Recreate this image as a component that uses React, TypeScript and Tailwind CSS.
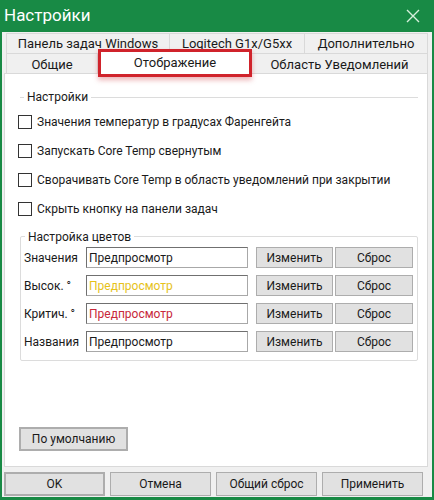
const checks = [
  'Значения температур в градусах Фаренгейта',
  'Запускать Core Temp свернутым',
  'Сворачивать Core Temp в область уведомлений при закрытии',
  'Скрыть кнопку на панели задач',
];

const colorRows = [
  { label: 'Значения', color: 'text-[#1a1a1a]' },
  { label: 'Высок. °', color: 'text-[#e6c21a]' },
  { label: 'Критич. °', color: 'text-[#c8283a]' },
  { label: 'Названия', color: 'text-[#1a1a1a]' },
];

function Btn({ children, className = '' }: { children: React.ReactNode; className?: string }) {
  return (
    <div
      className={
        'flex items-center justify-center border border-[#adadad] bg-[#e1e1e1] text-[#1a1a1a] ' + className
      }
    >
      {children}
    </div>
  );
}

export default function App() {
  return (
    <div
      className="flex h-[500px] w-[434px] flex-col bg-[#188a45] text-[12px] text-[#1a1a1a]"
      style={{ fontFamily: '"Segoe UI", Roboto, "Noto Sans", sans-serif' }}
    >
      {/* title bar */}
      <div className="flex h-[32px] items-center justify-between pl-[4px] pr-[14px] text-white">
        <span className="text-[17px]">Настройки</span>
        <svg width="14" height="14" viewBox="0 0 14 14">
          <path d="M1 1 L13 13 M13 1 L1 13" stroke="#d6f0dc" strokeWidth="1.4" />
        </svg>
      </div>

      <div className="mx-[2px] mb-[3px] flex flex-1 flex-col bg-[#f0f0f0] px-[2px]">
        {/* tabs */}
        <div className="mx-[2px] mt-[1px] flex h-[20px] border-t border-[#d9d9d9] text-[13px]">
          <div className="flex w-[164px] items-center justify-center border-x border-[#d9d9d9]">Панель задач Windows</div>
          <div className="flex w-[135px] items-center justify-center border-r border-[#d9d9d9]">Logitech G1x/G5xx</div>
          <div className="flex flex-1 items-center justify-center border-r border-[#d9d9d9]">Дополнительно</div>
        </div>
        <div className="relative mx-[2px] flex h-[20px] border-t border-[#d9d9d9] text-[13px]">
          <div className="flex w-[92px] items-center justify-center border-x border-[#d9d9d9] pt-[2px]">Общие</div>
          <div className="relative z-10 -mt-[5px] -mb-[4px] flex w-[154px] items-center justify-center border-[3px] border-[#d0232b] bg-white pb-[1px] shadow-[0_3px_5px_rgba(200,40,50,0.35)]">
            Отображение
          </div>
          <div className="flex flex-1 items-center justify-center border-r border-[#d9d9d9] pt-[2px]">Область Уведомлений</div>
        </div>

        {/* panel */}
        <div className="mr-[2px] flex h-[394px] flex-col border border-[#d9d9d9] bg-white">
          <div className="mt-[14px] ml-[15px] mr-[9px] flex items-center">
            <div className="h-px w-[4px] bg-[#dcdcdc]" />
            <span className="px-[3px]">Настройки</span>
            <div className="h-px flex-1 bg-[#dcdcdc]" />
          </div>
          <div className="ml-[13px] mt-[8px] flex flex-col gap-[13px]">
            {checks.map((c) => (
              <div key={c} className="flex h-[16px] items-center gap-[5px]">
                <div className="h-[14px] w-[14px] border border-[#333333] bg-white" />
                <span>{c}</span>
              </div>
            ))}
          </div>

          <div className="relative ml-[15px] mr-[9px] mt-[19px] h-[125px] rounded-[2px] border border-[#dcdcdc] pl-[3px] pt-[10px]">
            <span className="absolute -top-[9px] left-[4px] bg-white px-[3px]">Настройка цветов</span>
            <div className="flex flex-col gap-[7px]">
              {colorRows.map((r) => (
                <div key={r.label} className="flex h-[21px] items-center">
                  <span className="w-[62px]">{r.label}</span>
                  <div
                    className={
                      'flex h-[21px] w-[162px] items-center border border-[#a8a8a8] border-l-[#707070] border-t-[#707070] pl-[2px] ' +
                      r.color
                    }
                  >
                    Предпросмотр
                  </div>
                  <Btn className="ml-[8px] h-[21px] w-[77px]">Изменить</Btn>
                  <Btn className="ml-[2px] h-[21px] w-[78px]">Сброс</Btn>
                </div>
              ))}
            </div>
          </div>

          <Btn className="ml-[14px] mt-[66px] h-[24px] w-[109px] border-2 border-[#2a72b5]">По умолчанию</Btn>
        </div>

        {/* bottom buttons */}
        <div className="mt-[5px] flex gap-[5px]">
          <Btn className="h-[24px] w-[101px] border-2 border-[#2a72b5]">OK</Btn>
          <Btn className="h-[24px] w-[101px]">Отмена</Btn>
          <Btn className="h-[24px] w-[101px]">Общий сброс</Btn>
          <Btn className="h-[24px] w-[101px]">Применить</Btn>
        </div>
      </div>
    </div>
  );
}
